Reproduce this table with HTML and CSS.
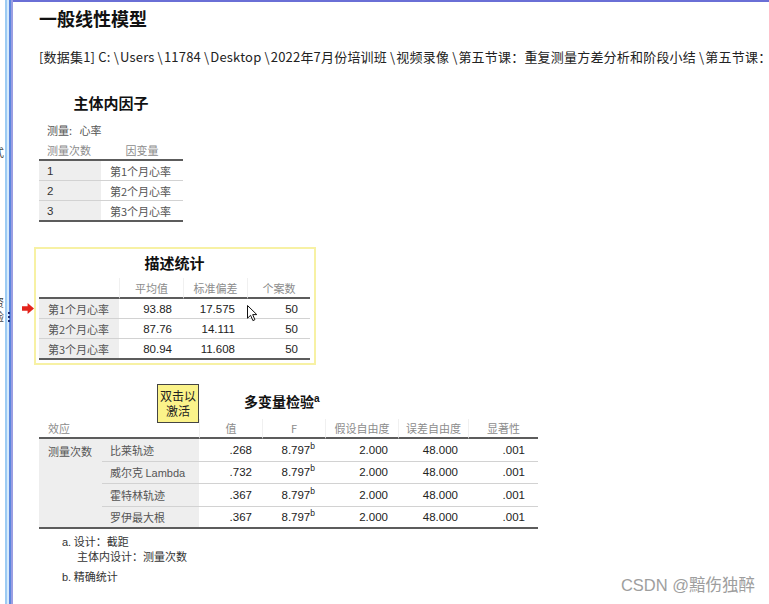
FILE: index.html
```html
<!DOCTYPE html>
<html lang="zh-CN">
<head>
<meta charset="utf-8">
<title>一般线性模型</title>
<link rel="stylesheet" href="styles.css">
</head>
<body>
<div class="app">
  <div class="gutter">
    <span class="frag f1">式</span>
    <span class="frag f2">资</span>
    <span class="frag f3">验</span>
  </div>
  <div class="splitter">
    <span class="dot"></span><span class="dot"></span><span class="dot"></span>
  </div>
  <div class="viewer">
    <h1 class="title">一般线性模型</h1>
    <p class="path">[数据集1] C:<span class="bs">\</span>Users<span class="bs">\</span>11784<span class="bs">\</span>Desktop<span class="bs">\</span>2022年7月份培训班<span class="bs">\</span>视频录像<span class="bs">\</span>第五节课：重复测量方差分析和阶段小结<span class="bs">\</span>第五节课：重复测量方差分析和阶段小结.sav</p>

    <section class="factors">
      <h2 class="btitle">主体内因子</h2>
      <div class="meta">测量:&nbsp;&nbsp; 心率</div>
      <table class="tbl t1">
        <colgroup><col class="c62"><col class="c82"></colgroup>
        <thead>
          <tr><th class="left">测量次数</th><th>因变量</th></tr>
        </thead>
        <tbody>
          <tr><td class="lab num1">1</td><td class="txt">第1个月心率</td></tr>
          <tr><td class="lab num1">2</td><td class="txt">第2个月心率</td></tr>
          <tr class="last"><td class="lab num1">3</td><td class="txt">第3个月心率</td></tr>
        </tbody>
      </table>
    </section>

    <section class="desc-box">
      <svg class="red-arrow" width="12" height="11" viewBox="0 0 12 11"><path d="M0 3.2H5.6V0L12 5.5L5.6 11V7.8H0Z" fill="#e3231c"/></svg>
      <svg class="cursor" width="11" height="17" viewBox="0 0 11 17"><path d="M0.5 0.5V13.2L3.6 10.3L5.9 15.6L7.9 14.7L5.7 9.6H9.8Z" fill="#fff" stroke="#111" stroke-width="1" stroke-linejoin="round"/></svg>
      <h2 class="btitle">描述统计</h2>
      <table class="tbl t2">
        <colgroup><col class="c80"><col class="c64"><col class="c64"><col class="c63"></colgroup>
        <thead>
          <tr><th></th><th class="sep">平均值</th><th class="sep">标准偏差</th><th class="sep">个案数</th></tr>
        </thead>
        <tbody>
          <tr><td class="lab">第1个月心率</td><td class="num">93.88</td><td class="num">17.575</td><td class="num">50</td></tr>
          <tr><td class="lab">第2个月心率</td><td class="num">87.76</td><td class="num">14.111</td><td class="num">50</td></tr>
          <tr class="last"><td class="lab">第3个月心率</td><td class="num">80.94</td><td class="num">11.608</td><td class="num">50</td></tr>
        </tbody>
      </table>
    </section>

    <section class="multi">
      <div class="tip">双击以<br>激活</div>
      <h2 class="btitle mt">多变量检验<sup>a</sup></h2>
      <table class="tbl t3">
        <colgroup><col class="c63"><col class="c97"><col class="c63"><col class="c63"><col class="c73"><col class="c70"><col class="c70"></colgroup>
        <thead>
          <tr><th class="left" colspan="2">效应</th><th class="sep">值</th><th class="sep">F</th><th class="sep">假设自由度</th><th class="sep">误差自由度</th><th class="sep">显著性</th></tr>
        </thead>
        <tbody>
          <tr><td class="lab top span" rowspan="4">测量次数</td><td class="lab sub">比莱轨迹</td><td class="num">.268</td><td class="num">8.797<sup>b</sup></td><td class="num">2.000</td><td class="num">48.000</td><td class="num">.001</td></tr>
          <tr><td class="lab sub">威尔克 <span class="latin">Lambda</span></td><td class="num">.732</td><td class="num">8.797<sup>b</sup></td><td class="num">2.000</td><td class="num">48.000</td><td class="num">.001</td></tr>
          <tr><td class="lab sub">霍特林轨迹</td><td class="num">.367</td><td class="num">8.797<sup>b</sup></td><td class="num">2.000</td><td class="num">48.000</td><td class="num">.001</td></tr>
          <tr class="last"><td class="lab sub">罗伊最大根</td><td class="num">.367</td><td class="num">8.797<sup>b</sup></td><td class="num">2.000</td><td class="num">48.000</td><td class="num">.001</td></tr>
        </tbody>
      </table>
      <div class="notes">
        <div class="note"><span class="latin">a.</span> 设计：截距</div>
        <div class="note indent">主体内设计：测量次数</div>
        <div class="note gap"><span class="latin">b.</span> 精确统计</div>
      </div>
    </section>
  </div>
</div>
<div class="watermark">CSDN @黯伤独醉</div>
</body>
</html>
```
FILE: styles.css
```css
html, body {
  margin: 0;
  padding: 0;
  background: #ffffff;
}
body {
  font-family: "Noto Sans CJK SC", "Liberation Sans", sans-serif;
  position: relative;
  width: 769px;
  height: 604px;
  overflow: hidden;
}
.app {
  display: flex;
  height: 604px;
  overflow: hidden;
}
.gutter {
  width: 5px;
  flex: none;
  overflow: hidden;
  display: flex;
  flex-direction: column;
  font-size: 11px;
  line-height: 12px;
  color: #444;
}
.frag {
  display: block;
  margin-left: -7px;
  width: 12px;
}
.f1 { margin-top: 146px; }
.f2 { margin-top: 138px; }
.f3 { margin-top: 2px; }

.splitter {
  width: 8px;
  flex: none;
  background: linear-gradient(to right, #9ccbf3 0 2px, #d6eafb 2px 4px, #5b86df 4px 6px, #9a9ee2 6px 8px);
  display: flex;
  flex-direction: column;
  align-items: center;
  padding-top: 312px;
  box-sizing: border-box;
  gap: 2px;
}
.dot {
  width: 2px;
  height: 2px;
  background: #1d2f7a;
}

.viewer {
  flex: 1;
  min-width: 0;
  border-top: 2px solid #6a6fd6;
  padding-left: 26px;
  overflow: hidden;
}
.title {
  margin: 4px 0 0;
  font-size: 18px;
  line-height: 24px;
  font-weight: 700;
  color: #111;
}
.path {
  margin: 18px 0 0;
  font-size: 13px;
  line-height: 18px;
  white-space: nowrap;
  color: #222;
  letter-spacing: 0.2px;
}
.path .bs {
  margin: 0 1px 0 3px;
}

.btitle {
  margin: 0;
  text-align: center;
  font-size: 15px;
  line-height: 18px;
  font-weight: 700;
  color: #111;
}
.btitle.mt {
  display: table;
  font-size: 14px;
  margin: 0 0 0 205px;
}
.btitle sup {
  font-family: "Liberation Sans", sans-serif;
  font-size: 10px;
  line-height: 0;
  vertical-align: 5px;
}

.factors {
  width: 144px;
  margin-top: 28px;
}
.meta {
  margin-top: 11px;
  padding-left: 8px;
  font-size: 11px;
  line-height: 14px;
  color: #555;
}

.tbl {
  border-collapse: separate;
  border-spacing: 0;
  table-layout: fixed;
}
.t1 { width: 144px; margin-top: 4px; }
.t2 { width: 271px; margin-top: 6px; }
.t3 { width: 499px; margin-top: 9px; }

.c62 { width: 62px; }
.c82 { width: 82px; }
.c80 { width: 80px; }
.c64 { width: 64px; }
.c63 { width: 63px; }
.c97 { width: 97px; }
.c73 { width: 73px; }
.c70 { width: 70px; }

.tbl th {
  font-weight: 400;
  font-size: 11px;
  color: #8c8c8c;
  padding: 0;
  text-align: center;
  border-bottom: 2px solid #5c5c5c;
  white-space: nowrap;
}
.t1 th { height: 18px; }
.t2 th { height: 19px; }
.t3 th { height: 18px; }
.tbl th.left {
  text-align: left;
  padding-left: 8px;
}
.t3 th.left { padding-left: 9px; }
.tbl th.sep {
  border-left: 1px solid #f0f0f0;
}

.tbl td {
  padding: 0;
  border-bottom: 1px solid #d2d2d2;
  white-space: nowrap;
  vertical-align: middle;
}
.tbl tr.last td,
.tbl td.span {
  border-bottom: 2px solid #5c5c5c;
}
.t1 td { height: 19px; }
.t2 td { height: 19px; }
.t3 td { height: 21.5px; }
.t1 tr.last td, .t2 tr.last td { height: 19px; }
.t3 tr.last td { height: 20.5px; }

.tbl td.lab {
  background: #eeeeee;
  font-size: 11px;
  color: #555;
  padding-left: 9px;
}
.tbl td.num1 {
  font-family: "Liberation Sans", sans-serif;
  font-size: 11.5px;
  color: #333;
  padding-left: 8px;
}
.tbl td.txt {
  font-size: 11px;
  color: #555;
  padding-left: 9px;
}
.tbl td.num {
  font-family: "Liberation Sans", sans-serif;
  font-size: 11.5px;
  color: #222;
  text-align: right;
  padding-right: 11px;
}
.t2 td.num:nth-child(3),
.t2 td.num:nth-child(4) { padding-right: 12px; }
.t3 td.num { padding-right: 10px; }
.t3 td.num:last-child { padding-right: 13px; }
.tbl td.top {
  vertical-align: top;
  padding-top: 4px;
}
.tbl td.sub {
  padding-left: 8px;
}
.tbl td sup {
  font-size: 8.5px;
  line-height: 0;
  vertical-align: 5px;
}
.latin {
  font-family: "Liberation Sans", sans-serif;
}

.desc-box {
  position: relative;
  width: 282px;
  box-sizing: border-box;
  margin: 25px 0 0 -5px;
  border: 2px solid #f7f1a4;
  padding: 5px 4px 3px 3px;
}
.red-arrow {
  position: absolute;
  left: -14px;
  top: 54px;
}
.cursor {
  position: absolute;
  left: 211px;
  top: 56px;
}

.multi {
  position: relative;
  width: 499px;
  margin-top: 27px;
}
.tip {
  position: absolute;
  left: 118px;
  top: -8px;
  width: 42px;
  height: 39px;
  box-sizing: border-box;
  border: 1px solid #444;
  background: #fbf38a;
  font-size: 12px;
  line-height: 15px;
  color: #222;
  text-align: center;
  padding-top: 3px;
}

.notes {
  margin-top: 5px;
  padding-left: 23px;
  font-size: 11px;
  line-height: 14px;
  color: #333;
}
.note.indent { padding-left: 15px; }
.note.gap { margin-top: 6px; }

.watermark {
  position: absolute;
  right: 14px;
  bottom: 9px;
  font-size: 16.5px;
  line-height: 20px;
  color: #9e9e9e;
  font-family: "Liberation Sans", "Noto Sans CJK SC", sans-serif;
}
```
